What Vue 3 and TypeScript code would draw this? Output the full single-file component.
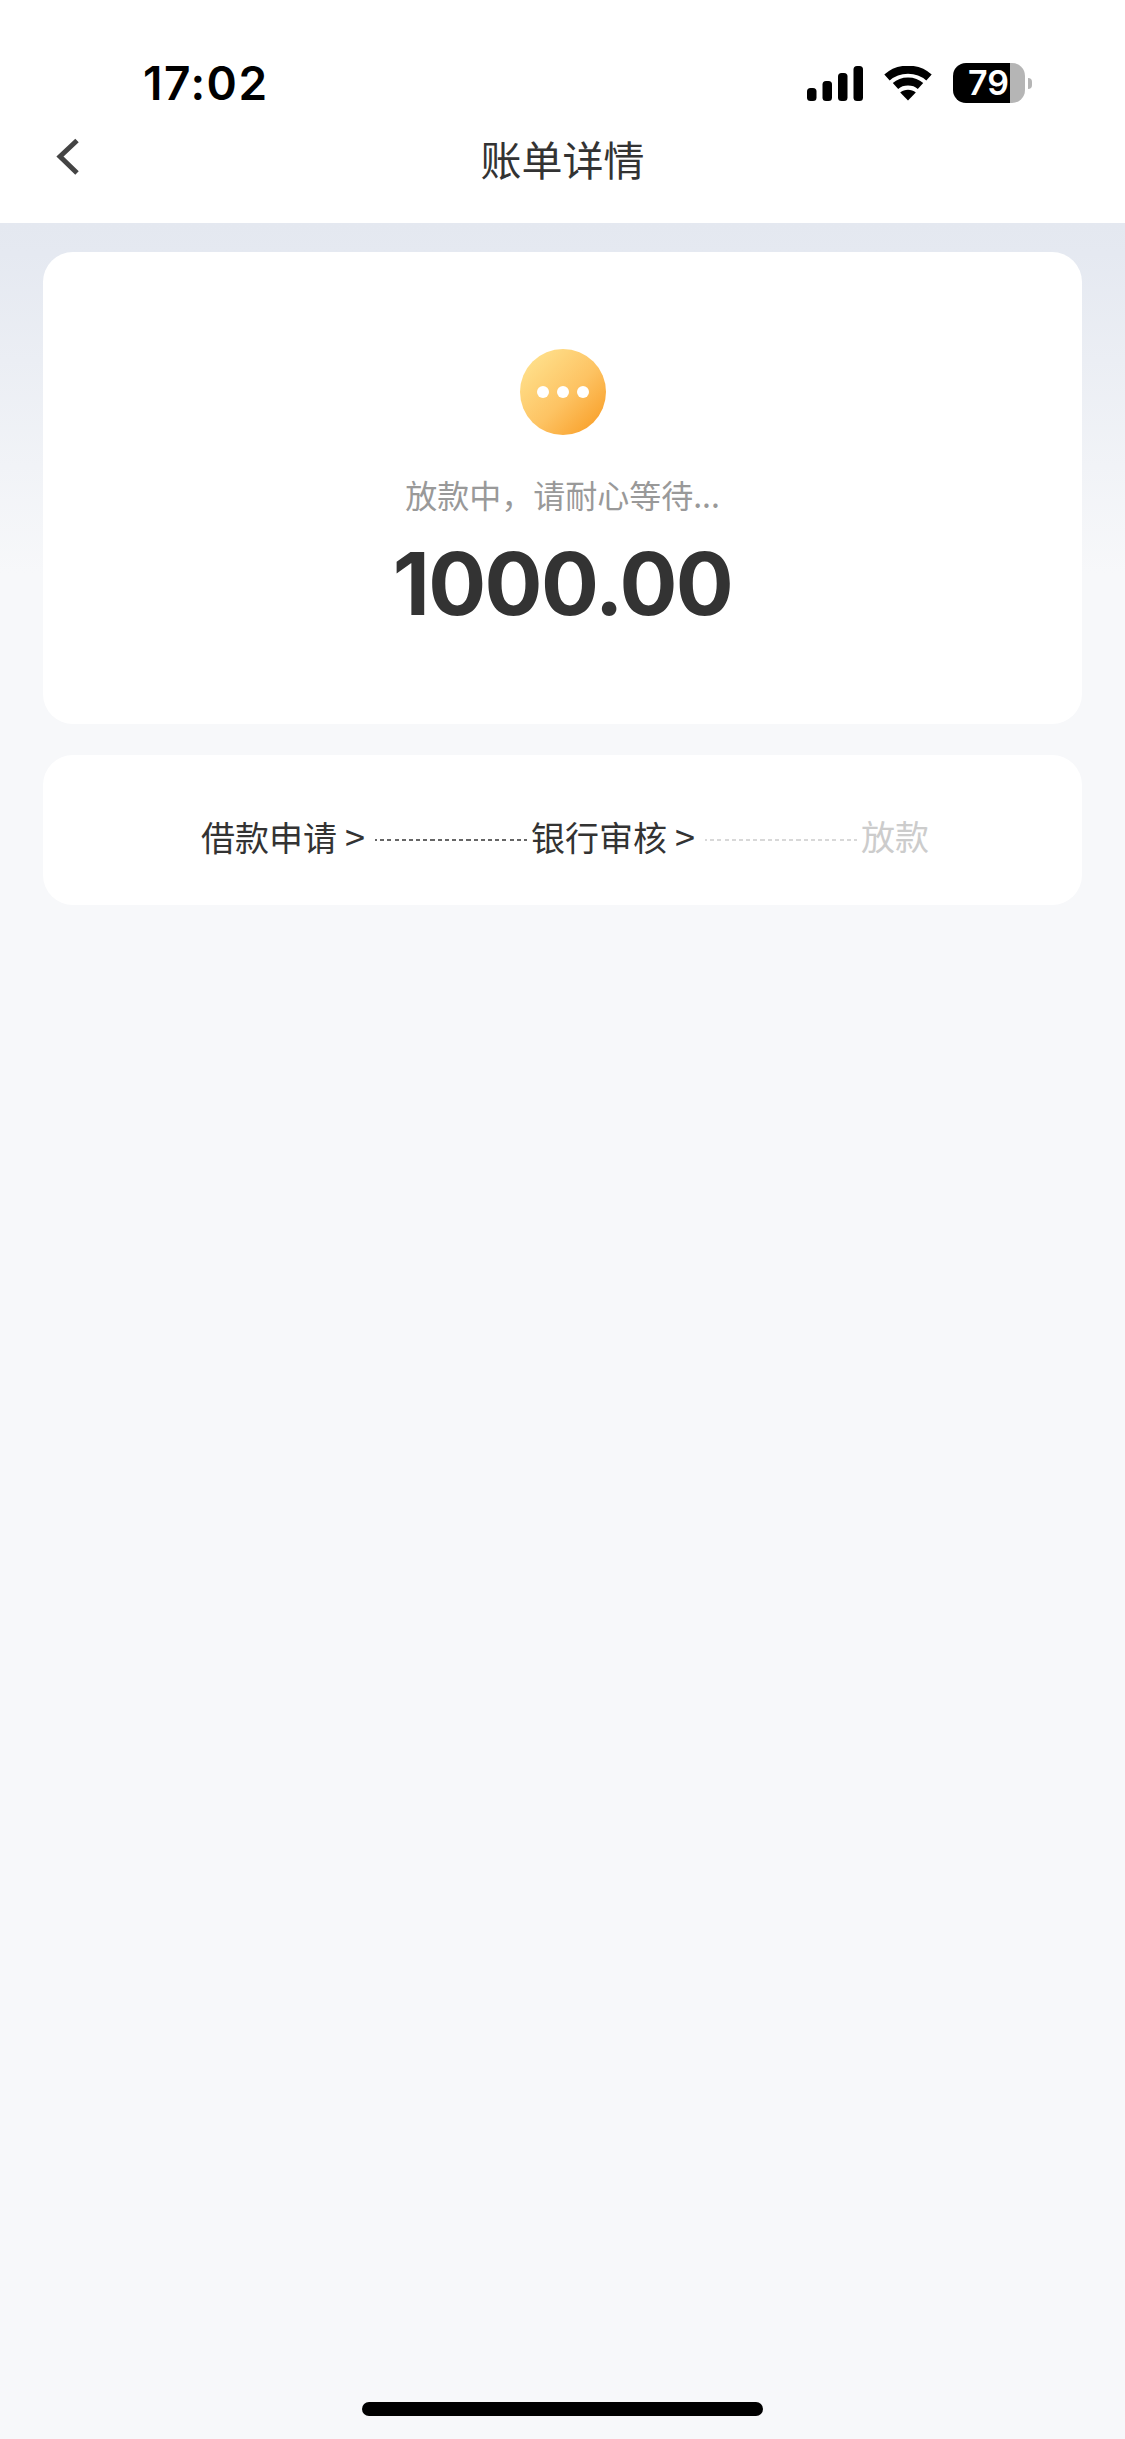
<template>
  <div class="page">
    <header class="top">
      <div class="status-bar">
        <span class="time">17:02</span>
        <div class="status-icons">
          <svg class="signal" width="56" height="35" viewBox="0 0 56 35">
            <rect x="0" y="22" width="9.5" height="13" rx="3.5" />
            <rect x="15.5" y="15" width="9.5" height="20" rx="3.5" />
            <rect x="31" y="7" width="9.5" height="28" rx="3.5" />
            <rect x="46.5" y="0" width="9.5" height="35" rx="3.5" />
          </svg>
          <svg class="wifi" width="48" height="35" viewBox="0 0 48 35">
            <path d="M3 11.5C14.5 1 33.5 1 45 11.5" />
            <path d="M11.5 20C18 14 30 14 36.5 20" />
            <path d="M24 34.5L16.2 26.6C20.5 22.8 27.5 22.8 31.8 26.6Z" class="wifi-dot" />
          </svg>
          <div class="battery">
            <div class="battery-body">
              <span class="battery-num">79</span>
            </div>
            <span class="battery-tip"></span>
          </div>
        </div>
      </div>
      <div class="nav">
        <svg class="back" width="24" height="38" viewBox="0 0 24 38">
          <path d="M21 2.5L4 18.5L21 35" />
        </svg>
        <h1 class="title">账单详情</h1>
      </div>
    </header>

    <main class="content">
      <section class="card status-card">
        <div class="status-icon">
          <i v-for="n in 3" :key="n"></i>
        </div>
        <p class="status-text">放款中，请耐心等待...</p>
        <p class="amount">{{ amount }}</p>
      </section>

      <section class="card steps-card">
        <template v-for="(step, i) in steps" :key="step.label">
          <span class="step" :class="{ off: !step.done }">{{ step.label }}<em v-if="i < steps.length - 1">&gt;</em></span>
          <span v-if="i < steps.length - 1" class="dash" :class="{ light: !steps[i + 1].done }"></span>
        </template>
      </section>
    </main>

    <div class="home-bar"></div>
  </div>
</template>

<script setup lang="ts">
interface Step {
  label: string
  done: boolean
}

const amount = '1000.00'

const steps: Step[] = [
  { label: '借款申请', done: true },
  { label: '银行审核', done: true },
  { label: '放款', done: false }
]
</script>

<style>
html,
body {
  margin: 0;
  background: #f7f8fa;
}
</style>

<style scoped>
.page {
  width: 1125px;
  height: 2439px;
  position: relative;
  overflow: hidden;
  display: flex;
  flex-direction: column;
  background: #f7f8fa;
  font-family: Inter, "Noto Sans CJK SC", sans-serif;
}

.top {
  height: 223px;
  background: #ffffff;
  flex-shrink: 0;
}

.status-bar {
  height: 127px;
  padding: 39px 93px 0 143px;
  display: flex;
  justify-content: space-between;
  align-items: center;
  box-sizing: border-box;
}

.time {
  font-size: 46px;
  font-weight: 600;
  color: #000;
  line-height: 1;
  letter-spacing: 1.5px;
}

.status-icons {
  display: flex;
  align-items: center;
  gap: 21px;
}

.signal rect {
  fill: #000;
}

.wifi path {
  fill: none;
  stroke: #000;
  stroke-width: 8;
}

.wifi .wifi-dot {
  fill: #000;
  stroke: none;
}

.battery {
  display: flex;
  align-items: center;
  gap: 3px;
}

.battery-body {
  width: 72px;
  height: 40px;
  border-radius: 13px;
  background: linear-gradient(90deg, #000 0, #000 79%, #b5b5b5 79%, #b5b5b5 100%);
  display: flex;
  align-items: center;
  padding-left: 15px;
  box-sizing: border-box;
}

.battery-num {
  color: #fff;
  font-size: 34px;
  font-weight: 600;
  line-height: 1;
}

.battery-tip {
  width: 4px;
  height: 11px;
  background: #b5b5b5;
  border-radius: 0 4px 4px 0;
}

.nav {
  height: 96px;
  position: relative;
  display: flex;
  align-items: center;
  justify-content: center;
}

.back {
  position: absolute;
  left: 56px;
  top: 11px;
}

.back path {
  fill: none;
  stroke: #444;
  stroke-width: 5;
}

.title {
  margin: 0;
  font-size: 41px;
  font-weight: 400;
  color: #333;
  line-height: 1;
  padding-bottom: 27px;
}

.content {
  flex: 1;
  padding: 29px 43px 0;
  display: flex;
  flex-direction: column;
  gap: 31px;
  background: linear-gradient(180deg, #e4e8f0 0, #e5e9f1 30px, #f7f8fa 350px);
}

.card {
  background: #fff;
  border-radius: 30px;
}

.status-card {
  height: 472px;
  display: flex;
  flex-direction: column;
  align-items: center;
  padding-top: 97px;
  box-sizing: border-box;
}

.status-icon {
  width: 86px;
  height: 86px;
  border-radius: 50%;
  background: linear-gradient(135deg, #ffe795 0%, #fdc363 55%, #f8981d 100%);
  display: flex;
  align-items: center;
  justify-content: center;
  gap: 8px;
}

.status-icon i {
  width: 12px;
  height: 12px;
  border-radius: 50%;
  background: #fff;
}

.status-text {
  margin: 39px 0 0;
  font-size: 32px;
  line-height: 40px;
  color: #999;
  font-family: "Noto Sans CJK SC", sans-serif;
}

.amount {
  margin: 20px 0 0;
  font-size: 86px;
  line-height: 100px;
  font-weight: 700;
  color: #333;
  letter-spacing: -1.6px;
}

.steps-card {
  height: 150px;
  display: flex;
  align-items: center;
  justify-content: center;
  padding: 18px 0 0 5px;
  box-sizing: border-box;
}

.step {
  font-size: 34px;
  line-height: 40px;
  color: #333;
  white-space: nowrap;
  padding-bottom: 6px;
  font-family: "Noto Sans CJK SC", sans-serif;
}

.step.off {
  color: #ccc;
}

.step em {
  font-style: normal;
  font-size: 36px;
  margin-left: 8px;
}

.dash {
  width: 152px;
  margin: 2px 4px 0 10px;
  border-top: 2px dashed #555;
  border-image: repeating-linear-gradient(90deg, #666 0 4px, transparent 4px 7px) 2;
}

.dash.light {
  border-image: repeating-linear-gradient(90deg, #d8d8d8 0 4px, transparent 4px 7px) 2;
}

.home-bar {
  position: absolute;
  left: 362px;
  top: 2402px;
  width: 401px;
  height: 14px;
  border-radius: 7px;
  background: #000;
}
</style>
